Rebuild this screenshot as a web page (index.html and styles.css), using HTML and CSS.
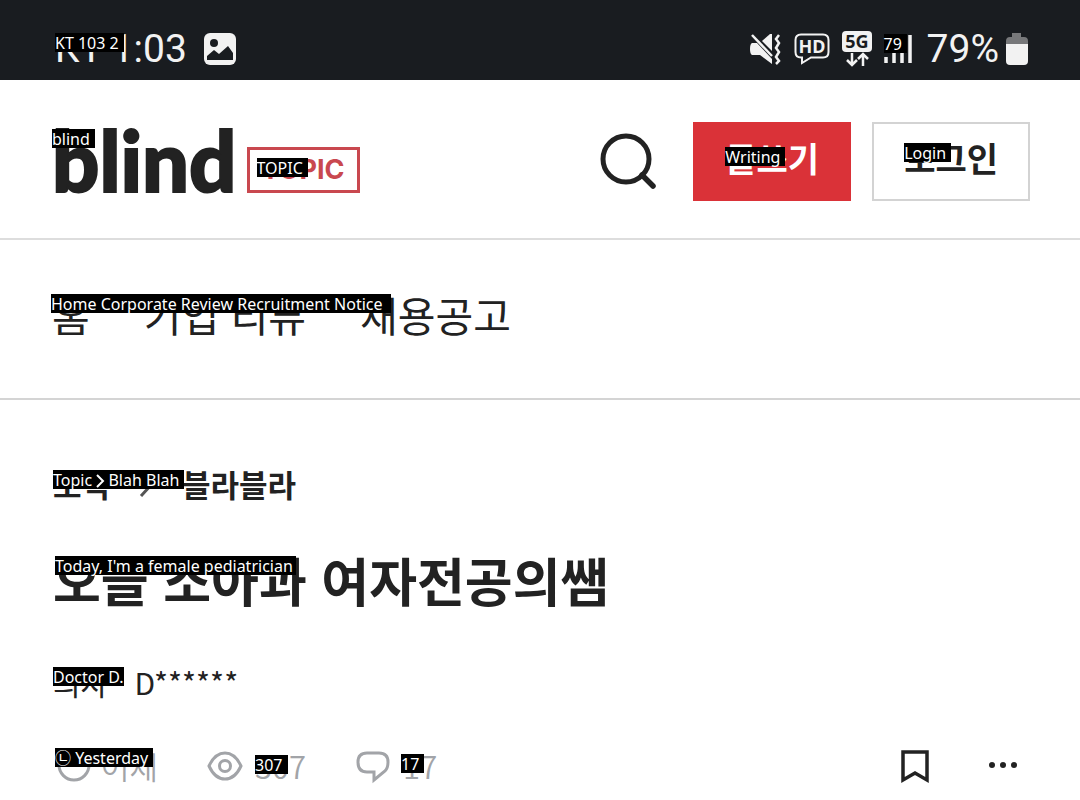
FILE: index.html
```html
<!DOCTYPE html>
<html lang="ko">
<head>
  <meta charset="UTF-8">
  <meta name="viewport" content="width=device-width, initial-scale=1.0">
  <title>blind</title>
  <link rel="stylesheet" href="styles.css">
</head>
<body>

  <!-- Phone status bar -->
  <div class="status-bar">
    <div class="status-left">
      <span class="tagged">KT 1:03<span class="tag tag-carrier">KT 103 2</span></span>
      <svg width="32" height="32" viewBox="0 0 32 32">
        <rect width="32" height="32" rx="6" fill="#f2f2f2"/>
        <circle cx="10" cy="10" r="4" fill="#191c20"/>
        <path d="M3 27v-4l7-6 5 4 9-8 5 7v7z" fill="#191c20"/>
      </svg>
    </div>
    <div class="status-right">
      <svg width="32" height="32" viewBox="0 0 32 32">
        <path d="M2 10h5l15 16v5L10 22H2q-2-1-2-6t2-6z" fill="#f2f2f2"/>
        <path d="M12 8l8-7h2v17z" fill="#f2f2f2"/>
        <path d="M2 2l20 21" stroke="#f2f2f2" stroke-width="2.5" fill="none"/>
        <path d="M29 2l-3 4 3 4-3 5 3 4-3 5 3 4-3 3" stroke="#f2f2f2" stroke-width="2.5" fill="none"/>
      </svg>
      <svg width="36" height="32" viewBox="0 0 36 32">
        <path d="M7 1.500h22q5.500 0 5.500 5.500v12q0 5.500-5.500 5.500H17L8 30v-5.500H7Q1.500 24.500 1.500 19V7q0-5.500 5.500-5.500z" fill="none" stroke="#f2f2f2" stroke-width="2"/>
        <text x="18" y="20" text-anchor="middle" class="icon-text">HD</text>
      </svg>
      <svg width="30" height="36" viewBox="0 0 30 36">
        <rect width="30" height="21" rx="4" fill="#f2f2f2"/>
        <text x="15" y="17" text-anchor="middle" class="icon-text icon-text-dark">5G</text>
        <path d="M10 22v12M5 29l5 5 5-5M21 35V23M16 28l5-5 5 5" stroke="#f2f2f2" stroke-width="2.500" fill="none"/>
      </svg>
      <span class="tagged">
        <svg width="28" height="30" viewBox="0 0 28 30">
          <path d="M2 23v6M10 17v12M18 10v19M26 1v28" stroke="#f2f2f2" stroke-width="3.500"/>
        </svg>
        <span class="tag tag-signal">79</span>
      </span>
      <span class="percent">79%</span>
      <svg width="22" height="32" viewBox="0 0 22 32">
        <path d="M6 0h9v4h3q4 0 4 4v4H0V8q0-4 4-4h2z" fill="#77787a"/>
        <path d="M0 11h22v17q0 4-4 4H4q-4 0-4-4z" fill="#f2f2f2"/>
      </svg>
    </div>
  </div>

  <header class="header">
    <a class="logo" href="#">
      <span class="tagged logo-name">blind<span class="tag tag-logo">blind</span></span>
      <span class="tagged logo-topic">TOPIC<span class="tag tag-topic">TOPIC</span></span>
    </a>
    <div class="actions">
      <button class="search" aria-label="검색">
        <svg width="58" height="58" viewBox="0 0 58 58">
          <circle cx="27" cy="26" r="23" fill="none" stroke="#222" stroke-width="5"/>
          <path d="M43 42l11 11" stroke="#222" stroke-width="5.500" stroke-linecap="round"/>
        </svg>
      </button>
      <button class="button button-write"><span class="tagged">글쓰기<span class="tag tag-write">Writing</span></span></button>
      <button class="button button-login"><span class="tagged">로그인<span class="tag tag-login">Login</span></span></button>
    </div>
  </header>

  <nav class="nav">
    <a href="#">홈</a>
    <a href="#">기업 리뷰</a>
    <a href="#">채용공고</a>
    <span class="tag tag-nav">Home Corporate Review Recruitment Notice</span>
  </nav>

  <main class="article">
    <div class="breadcrumb tagged">
      <a href="#">토픽</a>
      <svg width="16" height="28" viewBox="0 0 16 28">
        <path d="M3 2l11 12L3 26" fill="none" stroke="#555" stroke-width="3"/>
      </svg>
      <a href="#">블라블라</a>
      <span class="tag tag-crumb">Topic <svg class="tag-arrow" width="8" height="14" viewBox="0 0 8 14"><path d="M1 1l6 6-6 6" fill="none" stroke="#fff" stroke-width="2"/></svg> Blah Blah</span>
    </div>

    <h1 class="title tagged">오늘 소아과 여자전공의쌤<span class="tag tag-title">Today, I'm a female pediatrician</span></h1>

    <p class="author tagged"><a href="#">의사</a><span>·</span><span>D******</span><span class="tag tag-author">Doctor D.</span></p>

    <div class="meta">
      <div class="meta-item tagged">
        <svg width="36" height="36" viewBox="0 0 36 36" fill="none" stroke="#a2a4a8" stroke-width="3">
          <circle cx="21" cy="17" r="15"/>
          <path d="M20 8v8h8"/>
        </svg>
        <span>어제</span>
        <span class="tag tag-date">㉡ Yesterday</span>
      </div>
      <div class="meta-item tagged">
        <svg width="36" height="36" viewBox="0 0 36 36" fill="none" stroke="#a2a4a8" stroke-width="3">
          <path d="M2 18Q8 5 18 5t16 13Q28 31 18 31T2 18z"/>
          <circle cx="18" cy="18" r="5.500"/>
        </svg>
        <span>307</span>
        <span class="tag tag-views">307</span>
      </div>
      <div class="meta-item tagged">
        <svg width="36" height="36" viewBox="0 0 36 36" fill="none" stroke="#a2a4a8" stroke-width="3">
          <path d="M12 5h12q9 0 9 9 0 6-3 9l-11 9v-8h-7q-9 0-9-10 0-9 9-9z"/>
        </svg>
        <span>17</span>
        <span class="tag tag-comments">17</span>
      </div>
      <div class="meta-actions">
        <button aria-label="북마크">
          <svg width="30" height="36" viewBox="0 0 30 36">
            <path d="M3 4h24v28l-12-7-12 7z" fill="none" stroke="#222" stroke-width="3.500"/>
          </svg>
        </button>
        <button aria-label="더보기">
          <svg width="30" height="36" viewBox="0 0 30 36" fill="#222">
            <circle cx="4" cy="17" r="3"/>
            <circle cx="15" cy="17" r="3"/>
            <circle cx="26" cy="17" r="3"/>
          </svg>
        </button>
      </div>
    </div>
  </main>

</body>
</html>
```
FILE: styles.css
```css
body {
  margin: 0;
  background: #fff;
  color: #222;
  font-family: 'Noto Sans CJK KR', sans-serif;
}

a {
  color: inherit;
  text-decoration: none;
}

button {
  border: none;
  padding: 0;
  background: none;
  color: inherit;
  font-family: inherit;
  cursor: pointer;
}

svg {
  display: block;
  overflow: visible;
}

/* translation labels that lie over the original text */
.tagged {
  position: relative;
}

.tag {
  position: absolute;
  box-sizing: border-box;
  height: 19px;
  padding-right: 5px;
  background: #000;
  color: #fff;
  font-family: 'Noto Sans', 'Noto Sans CJK KR', sans-serif;
  font-size: 16px;
  font-weight: 400;
  line-height: 20px;
  white-space: nowrap;
  -webkit-text-stroke: 0;
}

.tag-arrow {
  display: inline-block;
  vertical-align: -2px;
}

.tag-carrier { left: 0; top: 4px; }
.tag-signal { left: 0; top: 0; }
.tag-logo { left: 0; top: 6px; }
.tag-topic { left: 7px; top: 8px; }
.tag-write { left: 0; top: 14px; }
.tag-login { left: 0; top: 10px; }
.tag-nav { left: 51px; top: 54px; padding-right: 8px; }
.tag-crumb { left: 0; top: 6px; }
.tag-title { left: 2px; top: 6px; padding-right: 3px; }
.tag-author { left: 0; top: 5px; padding-right: 0; }
.tag-date { left: 2px; top: 0; }
.tag-views { left: 48px; top: 7px; }
.tag-comments { left: 46px; top: 6px; }

.status-bar {
  display: flex;
  align-items: center;
  justify-content: space-between;
  height: 80px;
  padding: 18px 52px 0 55px;
  box-sizing: border-box;
  background: #191c20;
  color: #f2f2f2;
  font-family: Roboto, sans-serif;
  font-size: 39px;
  line-height: 40px;
}

.status-left {
  display: flex;
  align-items: center;
  gap: 17px;
}

.status-right {
  display: flex;
  align-items: center;
  gap: 12px;
}

.percent {
  margin-left: 3px;
  margin-right: -5px;
}

.icon-text {
  fill: #f2f2f2;
  font: 700 18px 'Noto Sans', sans-serif;
}

.icon-text-dark {
  fill: #191c20;
}

.header {
  display: flex;
  align-items: center;
  justify-content: space-between;
  padding: 42px 50px 37px 52px;
  border-bottom: 2px solid #ddd;
}

.logo {
  display: flex;
  align-items: flex-end;
  gap: 10px;
}

.logo-name {
  padding-bottom: 4px;
  font-family: Lato, sans-serif;
  font-size: 83px;
  font-weight: 900;
  line-height: 74px;
  -webkit-text-stroke: 2px #222;
}

.logo-topic {
  margin-bottom: 8px;
  padding: 0 12px;
  border: 3px solid #c9484f;
  color: #c9484f;
  font-family: Inter, sans-serif;
  font-size: 27px;
  font-weight: 700;
  line-height: 40px;
}

.actions {
  display: flex;
  align-items: center;
  gap: 21px;
}

.search {
  margin-right: 15px;
}

.button {
  box-sizing: border-box;
  height: 79px;
  padding: 0 30px 8px;
  border: 2px solid #d3d3d3;
  font-size: 34px;
  font-weight: 700;
  line-height: 40px;
}

.button-write {
  border-color: #da3238;
  background: #da3238;
  color: #fff;
}

.nav {
  position: relative;
  display: flex;
  gap: 54px;
  padding: 50px 52px 60px;
  border-bottom: 2px solid #d4d4d4;
  font-size: 41px;
  line-height: 48px;
}

.article {
  padding: 64px 50px 16px 53px;
}

.breadcrumb {
  display: flex;
  align-items: center;
  gap: 28px;
  font-size: 31px;
  font-weight: 700;
  line-height: 40px;
}

.title {
  margin: 46px 0 0;
  font-size: 52px;
  font-weight: 700;
  line-height: 60px;
}

.author {
  display: flex;
  gap: 9px;
  margin: 52px 0 0;
  font-size: 30px;
  line-height: 40px;
}

.meta {
  display: flex;
  align-items: center;
  gap: 49px;
  margin-top: 46px;
  color: #a2a4a8;
  font-size: 31px;
  font-weight: 350;
  line-height: 36px;
}

.meta-item {
  display: flex;
  align-items: center;
  gap: 12px;
}

.meta-actions {
  display: flex;
  gap: 58px;
  margin-left: auto;
  margin-right: 12px;
}
```
